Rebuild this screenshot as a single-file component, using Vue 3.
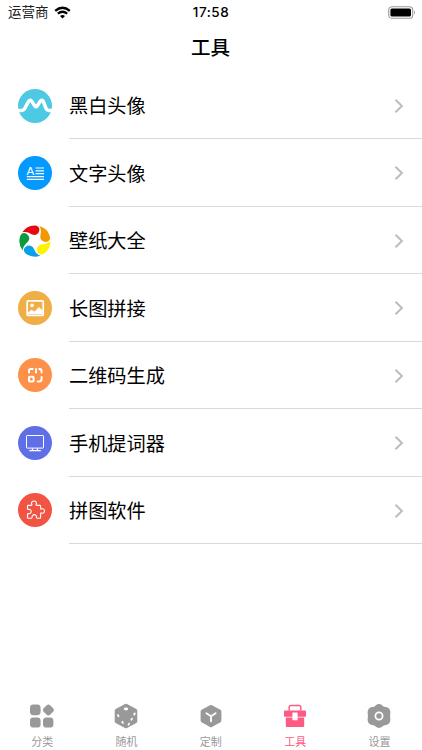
<template>
  <div class="page">
    <!-- 状态栏 -->
    <div class="status-bar">
      <div class="carrier">
        <span>运营商</span>
        <svg class="wifi" viewBox="0 0 17 13">
          <path d="M1.2 4.8 Q8.5 -1.4 15.8 4.8" fill="none" stroke="#000" stroke-width="2.4" />
          <path d="M3.8 7.7 Q8.5 3.8 13.2 7.7" fill="none" stroke="#000" stroke-width="2.2" />
          <path d="M6 10.1 Q8.5 8 11 10.1 L8.5 12.6 Z" />
        </svg>
      </div>
      <span class="clock">17:58</span>
      <svg class="battery" viewBox="0 0 28 13">
        <rect x="0.7" y="0.7" width="24" height="11.6" rx="3.4" fill="none" stroke="#999" stroke-width="1.1" />
        <rect x="2.4" y="2.4" width="20.6" height="8.2" rx="1.5" />
        <path d="M26 4.6 Q28 6.5 26 8.4 Z" fill="#999" />
      </svg>
    </div>

    <h1 class="title">工具</h1>

    <!-- 工具列表 -->
    <div class="list">
      <div v-for="tool in tools" :key="tool.icon" class="row">
        <svg class="row-icon" viewBox="0 0 34 34">
          <circle v-if="tool.color" cx="17" cy="17" r="17" :fill="tool.color" />
          <path
            v-if="tool.icon === 'wave'"
            d="M0 21.4 H4 Q5.8 21.4 6.8 19.4 L10.4 12.6 Q12.2 9.8 14 12.6 L16.8 17 Q18 18.6 19.2 17 L22 12.6 Q24 9.8 25.4 12.6 L28 19.4 Q29 21.4 30.6 21.4 H34"
            fill="none"
            stroke="#fff"
            stroke-width="3.5"
          />
          <g v-else-if="tool.icon === 'text'">
            <text x="8.6" y="18.9" class="letter">A</text>
            <path d="M17.5 12H26M17.5 14.8H26M17.5 17.6H26M8.8 20.6H26M8.8 23.4H26" stroke="#fff" stroke-width="1.2" />
          </g>
          <g v-else-if="tool.icon === 'wallpaper'">
            <path
              v-for="(color, i) in petals"
              :key="color"
              d="M4.2 8.2 A15.6 15.6 0 0 1 16.5 1.4 C20.4 1.4 21.9 4 21.2 6.9 C20.4 10.2 17 11.8 14.2 10.5 C11.6 9.1 8.8 7.2 4.2 8.2 Z"
              :fill="color"
              :transform="`rotate(${i * 72} 17 17)`"
            />
          </g>
          <g v-else-if="tool.icon === 'image'">
            <rect x="9.2" y="9.8" width="16" height="14.6" rx="1" fill="none" stroke="#fff" stroke-width="1.7" />
            <circle cx="14" cy="14.4" r="1.8" fill="#fff" />
            <path d="M10 21.5 L13.5 18.8 L16.5 20.6 L21 16 L24.5 19.5 V23 H10 Z" fill="#fff" />
          </g>
          <g v-else-if="tool.icon === 'qrcode'" fill="none" stroke="#fff" stroke-width="2" stroke-linecap="round">
            <path d="M11 14.6 V12.8 Q11 11 12.8 11 H14.6M18 11 V14.4M21.2 11 Q23.6 11 23.6 13.2 V14.6M23.6 19 V21 Q23.6 23.6 21 23.6 H19.8" />
            <rect x="11" y="18.8" width="4.6" height="4.8" rx="1" />
          </g>
          <g v-else-if="tool.icon === 'screen'" fill="none" stroke="#fff">
            <rect x="8.5" y="9.5" width="17" height="12.6" rx="0.6" stroke-width="1" />
            <path d="M14.5 22.3 V24.3 M19.5 22.3 V24.3 M11.3 24.7 H22.8" stroke-width="1.2" />
          </g>
          <path
            v-else
            d="M9.5 13.2 Q9.5 12.4 10.3 12.4 H13.2 Q14.2 12.2 13.8 11.3 C13 9.5 14.2 8 16 8 C17.8 8 19 9.5 18.2 11.3 Q17.8 12.2 18.7 12.4 H21.8 Q22.6 12.4 22.6 13.2 V15.4 Q22.8 16.4 23.7 16 C25.2 15.2 26.5 16.4 26.5 18 C26.5 19.6 25.2 20.8 23.7 20 Q22.8 19.6 22.6 20.5 V24.4 Q22.6 25.2 21.8 25.2 H19.2 Q18.5 25 18.5 24.2 C18.6 22.5 17.6 21.6 16.3 21.6 C15 21.6 14 22.5 14.1 24.2 Q14.1 25 13.4 25.2 H10.3 Q9.5 25.2 9.5 24.4 V21.2 Q9.7 20.5 10.6 20.6 C12.2 20.8 13.2 19.8 13.2 18.5 C13.2 17.2 12.2 16.2 10.6 16.4 Q9.7 16.5 9.5 15.8 Z"
            fill="none"
            stroke="#fff"
            stroke-width="1.1"
          />
        </svg>
        <div class="row-body">
          <span class="name">{{ tool.name }}</span>
          <svg class="arrow" viewBox="0 0 10 16">
            <path d="M1.5 1.7 L7.9 8 L1.5 14.3" fill="none" stroke="#bdbdbd" stroke-width="2" />
          </svg>
        </div>
      </div>
    </div>

    <!-- 底部标签栏 -->
    <div class="tab-bar">
      <div
        v-for="tab in tabs"
        :key="tab.icon"
        class="tab"
        :class="{ active: tab.icon === current }"
        @click="current = tab.icon"
      >
        <svg class="tab-icon" viewBox="0 0 26 26" fill="currentColor">
          <g v-if="tab.icon === 'category'">
            <rect x="1" y="1.6" width="10.6" height="10.6" rx="3.4" />
            <rect x="14.8" y="2.4" width="9.2" height="9.2" rx="2.8" transform="rotate(45 19.4 7)" />
            <rect x="1" y="14.4" width="10.6" height="10.2" rx="3.4" />
            <rect x="14" y="14.4" width="10.4" height="10.2" rx="3.4" />
          </g>
          <g v-else-if="tab.icon === 'random'">
            <path d="M12 1.1 Q13 0.6 14 1.1 L23.3 6 Q24.3 6.6 24.3 7.7 V18.4 Q24.3 19.5 23.3 20 L14 25 Q13 25.5 12 25 L2.7 20 Q1.7 19.5 1.7 18.4 V7.7 Q1.7 6.6 2.7 6 Z" />
            <g fill="#fff">
              <ellipse cx="13" cy="6" rx="2.2" ry="1.4" />
              <ellipse cx="5.2" cy="12.7" rx="1" ry="1.6" transform="rotate(-25 5.2 12.7)" />
              <ellipse cx="9.6" cy="19.4" rx="1" ry="1.6" transform="rotate(-25 9.6 19.4)" />
              <ellipse cx="21.5" cy="11" rx="1" ry="1.6" transform="rotate(25 21.5 11)" />
              <ellipse cx="18.7" cy="16.2" rx="1" ry="1.6" transform="rotate(25 18.7 16.2)" />
              <ellipse cx="15.8" cy="21.2" rx="1" ry="1.6" transform="rotate(25 15.8 21.2)" />
            </g>
          </g>
          <g v-else-if="tab.icon === 'custom'">
            <path d="M12 2.2 Q13 1.7 14 2.2 L22.4 6.8 Q23.4 7.4 23.4 8.5 V17.6 Q23.4 18.7 22.4 19.3 L14 24 Q13 24.5 12 24 L3.6 19.3 Q2.6 18.7 2.6 17.6 V8.5 Q2.6 7.4 3.6 6.8 Z" />
            <path d="M8.4 10.2 L13 13.2 L17.6 10.2 M13 13.2 V18.2" fill="none" stroke="#fff" stroke-width="1.9" stroke-linecap="round" />
          </g>
          <g v-else-if="tab.icon === 'tools'">
            <path d="M7.2 7.5 V4.2 Q7.2 2.4 9 2.4 H17 Q18.8 2.4 18.8 4.2 V7.5" fill="none" stroke="currentColor" stroke-width="1.5" />
            <rect x="2" y="7.4" width="22" height="6.4" rx="0.8" />
            <path d="M3.8 14.4 H22.2 V23 Q22.2 24 21.2 24 H4.8 Q3.8 24 3.8 23 Z" />
            <rect x="10.4" y="9.4" width="5.2" height="7.8" rx="0.6" fill="#fff" />
          </g>
          <g v-else>
            <path d="M9.6 2.4 Q13 -0.4 16.4 2.4 Q17.8 4.1 20.2 3.9 Q24.4 5 24.4 9.4 Q23.8 13 24.4 16.6 Q24.4 21 20.2 22.1 Q17.8 21.9 16.4 23.6 Q13 26.4 9.6 23.6 Q8.2 21.9 5.8 22.1 Q1.6 21 1.6 16.6 Q2.2 13 1.6 9.4 Q1.6 5 5.8 3.9 Q8.2 4.1 9.6 2.4 Z" />
            <circle cx="13" cy="13" r="3.6" fill="none" stroke="#fff" stroke-width="1.8" />
          </g>
        </svg>
        <span class="tab-name">{{ tab.name }}</span>
      </div>
    </div>
  </div>
</template>

<script setup>
import { ref } from 'vue'

const tools = [
  { icon: 'wave', name: '黑白头像', color: '#4dc9e3' },
  { icon: 'text', name: '文字头像', color: '#0399ff' },
  { icon: 'wallpaper', name: '壁纸大全' },
  { icon: 'image', name: '长图拼接', color: '#efaf46' },
  { icon: 'qrcode', name: '二维码生成', color: '#fe9149' },
  { icon: 'screen', name: '手机提词器', color: '#5f6fe8' },
  { icon: 'puzzle', name: '拼图软件', color: '#f25443' }
]

// 从顶部开始顺时针
const petals = ['#e50914', '#f39800', '#fff100', '#0aa0e8', '#0b9a3e']

const tabs = [
  { icon: 'category', name: '分类' },
  { icon: 'random', name: '随机' },
  { icon: 'custom', name: '定制' },
  { icon: 'tools', name: '工具' },
  { icon: 'settings', name: '设置' }
]

const current = ref('tools')
</script>

<style>
body {
  margin: 0;
  background: #fff;
}
</style>

<style scoped>
.page {
  height: 750px;
  display: flex;
  flex-direction: column;
  overflow: hidden;
  background: #fff;
  color: #000;
  font-family: Inter, "Noto Sans CJK SC", sans-serif;
}

/* 状态栏 */
.status-bar {
  height: 23px;
  flex-shrink: 0;
  display: grid;
  grid-template-columns: 1fr auto 1fr;
  align-items: center;
  padding: 0 6px 0 8px;
  box-sizing: border-box;
}

.carrier {
  display: flex;
  align-items: center;
  gap: 5px;
  font-size: 13.5px;
  line-height: 23px;
  color: #222;
}

.carrier span {
  padding-top: 1px;
}

.wifi {
  width: 17px;
  height: 13px;
}

.clock {
  margin-right: 2px;
  font-size: 13.5px;
  font-weight: 500;
  letter-spacing: 0.5px;
}

.battery {
  width: 28px;
  height: 13px;
  justify-self: end;
}

.title {
  height: 49px;
  flex-shrink: 0;
  margin: 0;
  padding-right: 1px;
  font-size: 19.5px;
  font-weight: 500;
  line-height: 50px;
  text-align: center;
}

/* 工具列表 */
.list {
  flex: 1;
}

.row {
  height: 67.45px;
  display: flex;
  align-items: center;
  padding-left: 18px;
}

.row-icon {
  width: 34px;
  height: 34px;
  flex-shrink: 0;
}

.letter {
  font-family: "Liberation Sans", sans-serif;
  font-size: 11.5px;
  fill: #fff;
}

.row-body {
  flex: 1;
  height: 100%;
  display: flex;
  align-items: center;
  justify-content: space-between;
  margin-left: 17px;
  padding: 1.5px 18px 0 0;
  box-sizing: border-box;
  border-bottom: 1px solid #d9d9d9;
}

.name {
  padding-top: 1px;
  font-size: 19.2px;
  line-height: 28px;
}

.arrow {
  width: 10px;
  height: 16px;
}

/* 底部标签栏 */
.tab-bar {
  height: 50px;
  flex-shrink: 0;
  display: flex;
  padding-right: 0.4px;
}

.tab {
  flex: 1;
  display: flex;
  flex-direction: column;
  align-items: center;
  padding-top: 3px;
  color: #999;
  cursor: pointer;
}

.tab.active {
  color: #fd5b84;
}

.tab-icon {
  width: 26px;
  height: 26px;
}

.tab-name {
  margin-top: 5px;
  font-size: 11px;
  line-height: 16px;
}
</style>
